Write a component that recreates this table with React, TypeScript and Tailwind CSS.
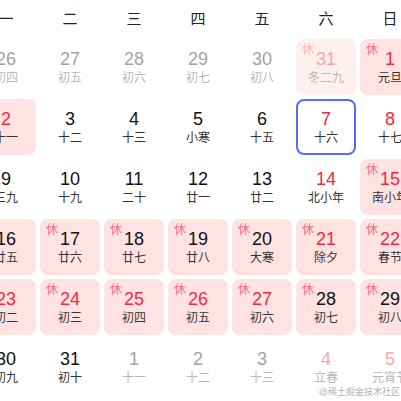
import React from 'react'

type Day = {
  n: number
  lunar: string
  rest?: boolean
  red?: boolean
  out?: boolean
  today?: boolean
}

const weekdays = ['一', '二', '三', '四', '五', '六', '日']

const days: Day[] = [
  { n: 26, lunar: '初四', out: true },
  { n: 27, lunar: '初五', out: true },
  { n: 28, lunar: '初六', out: true },
  { n: 29, lunar: '初七', out: true },
  { n: 30, lunar: '初八', out: true },
  { n: 31, lunar: '冬二九', out: true, rest: true, red: true },
  { n: 1, lunar: '元旦', rest: true, red: true },

  { n: 2, lunar: '十一', rest: true, red: true },
  { n: 3, lunar: '十二' },
  { n: 4, lunar: '十三' },
  { n: 5, lunar: '小寒' },
  { n: 6, lunar: '十五' },
  { n: 7, lunar: '十六', red: true, today: true },
  { n: 8, lunar: '十七', red: true },

  { n: 9, lunar: '三九' },
  { n: 10, lunar: '十九' },
  { n: 11, lunar: '二十' },
  { n: 12, lunar: '廿一' },
  { n: 13, lunar: '廿二' },
  { n: 14, lunar: '北小年', red: true },
  { n: 15, lunar: '南小年', rest: true, red: true },

  { n: 16, lunar: '廿五', rest: true },
  { n: 17, lunar: '廿六', rest: true },
  { n: 18, lunar: '廿七', rest: true },
  { n: 19, lunar: '廿八', rest: true },
  { n: 20, lunar: '大寒', rest: true },
  { n: 21, lunar: '除夕', rest: true, red: true },
  { n: 22, lunar: '春节', rest: true, red: true },

  { n: 23, lunar: '初二', rest: true, red: true },
  { n: 24, lunar: '初三', rest: true, red: true },
  { n: 25, lunar: '初四', rest: true, red: true },
  { n: 26, lunar: '初五', rest: true, red: true },
  { n: 27, lunar: '初六', rest: true, red: true },
  { n: 28, lunar: '初七', rest: true },
  { n: 29, lunar: '初八', rest: true },

  { n: 30, lunar: '初九' },
  { n: 31, lunar: '初十' },
  { n: 1, lunar: '十一', out: true },
  { n: 2, lunar: '十二', out: true },
  { n: 3, lunar: '十三', out: true },
  { n: 4, lunar: '立春', out: true, red: true },
  { n: 5, lunar: '元宵节', out: true, red: true },
]

function Cell({ d }: { d: Day }) {
  let bg = ''
  if (d.rest) bg = d.out ? 'bg-[#fff0f0]' : 'bg-[#ffe3e3]'
  const border = d.today ? 'border-2 border-[#4f6ef7]' : ''

  let numColor = 'text-[#111]'
  if (d.out) numColor = d.red ? 'text-[#ffa3a3]' : 'text-[#a3a3a3]'
  else if (d.red) numColor = 'text-[#f5293a]'

  const lunarColor = d.out ? 'text-[#b8b8b8]' : 'text-[#333]'

  return (
    <div
      className={`relative flex h-[56px] flex-col items-center justify-center rounded-[8px] ${bg} ${border}`}
    >
      {d.rest && (
        <span
          className={`absolute left-[6px] top-[4px] text-[12px] leading-[14px] ${
            d.out ? 'text-[#ffb4b4]' : 'text-[#f56c7a]'
          }`}
        >
          休
        </span>
      )}
      <span className={`text-[18px] leading-[22px] ${numColor}`}>{d.n}</span>
      <span className={`whitespace-nowrap text-[12px] leading-[16px] ${lunarColor}`}>
        {d.lunar}
      </span>
    </div>
  )
}

export default function App() {
  return (
    <div
      className="relative h-[401px] w-[401px] overflow-hidden bg-white"
      style={{ fontFamily: '"Liberation Sans", "Noto Sans CJK SC", sans-serif' }}
    >
      <div className="ml-[-24px] w-[444px]">
        {/* weekday header */}
        <div className="grid h-[39px] grid-cols-7 gap-x-[4px]">
          {weekdays.map((w) => (
            <div key={w} className="flex items-center justify-center pb-[1px] text-[15px] text-[#222]">
              {w}
            </div>
          ))}
        </div>

        {/* days */}
        <div className="grid grid-cols-7 gap-[4px]">
          {days.map((d, i) => (
            <Cell key={i} d={d} />
          ))}
        </div>
      </div>

      <span className="absolute bottom-[3px] right-[1px] whitespace-nowrap text-[9px] leading-[11px] text-[#b5b5b5]">
        @稀土掘金技术社区
      </span>
    </div>
  )
}
